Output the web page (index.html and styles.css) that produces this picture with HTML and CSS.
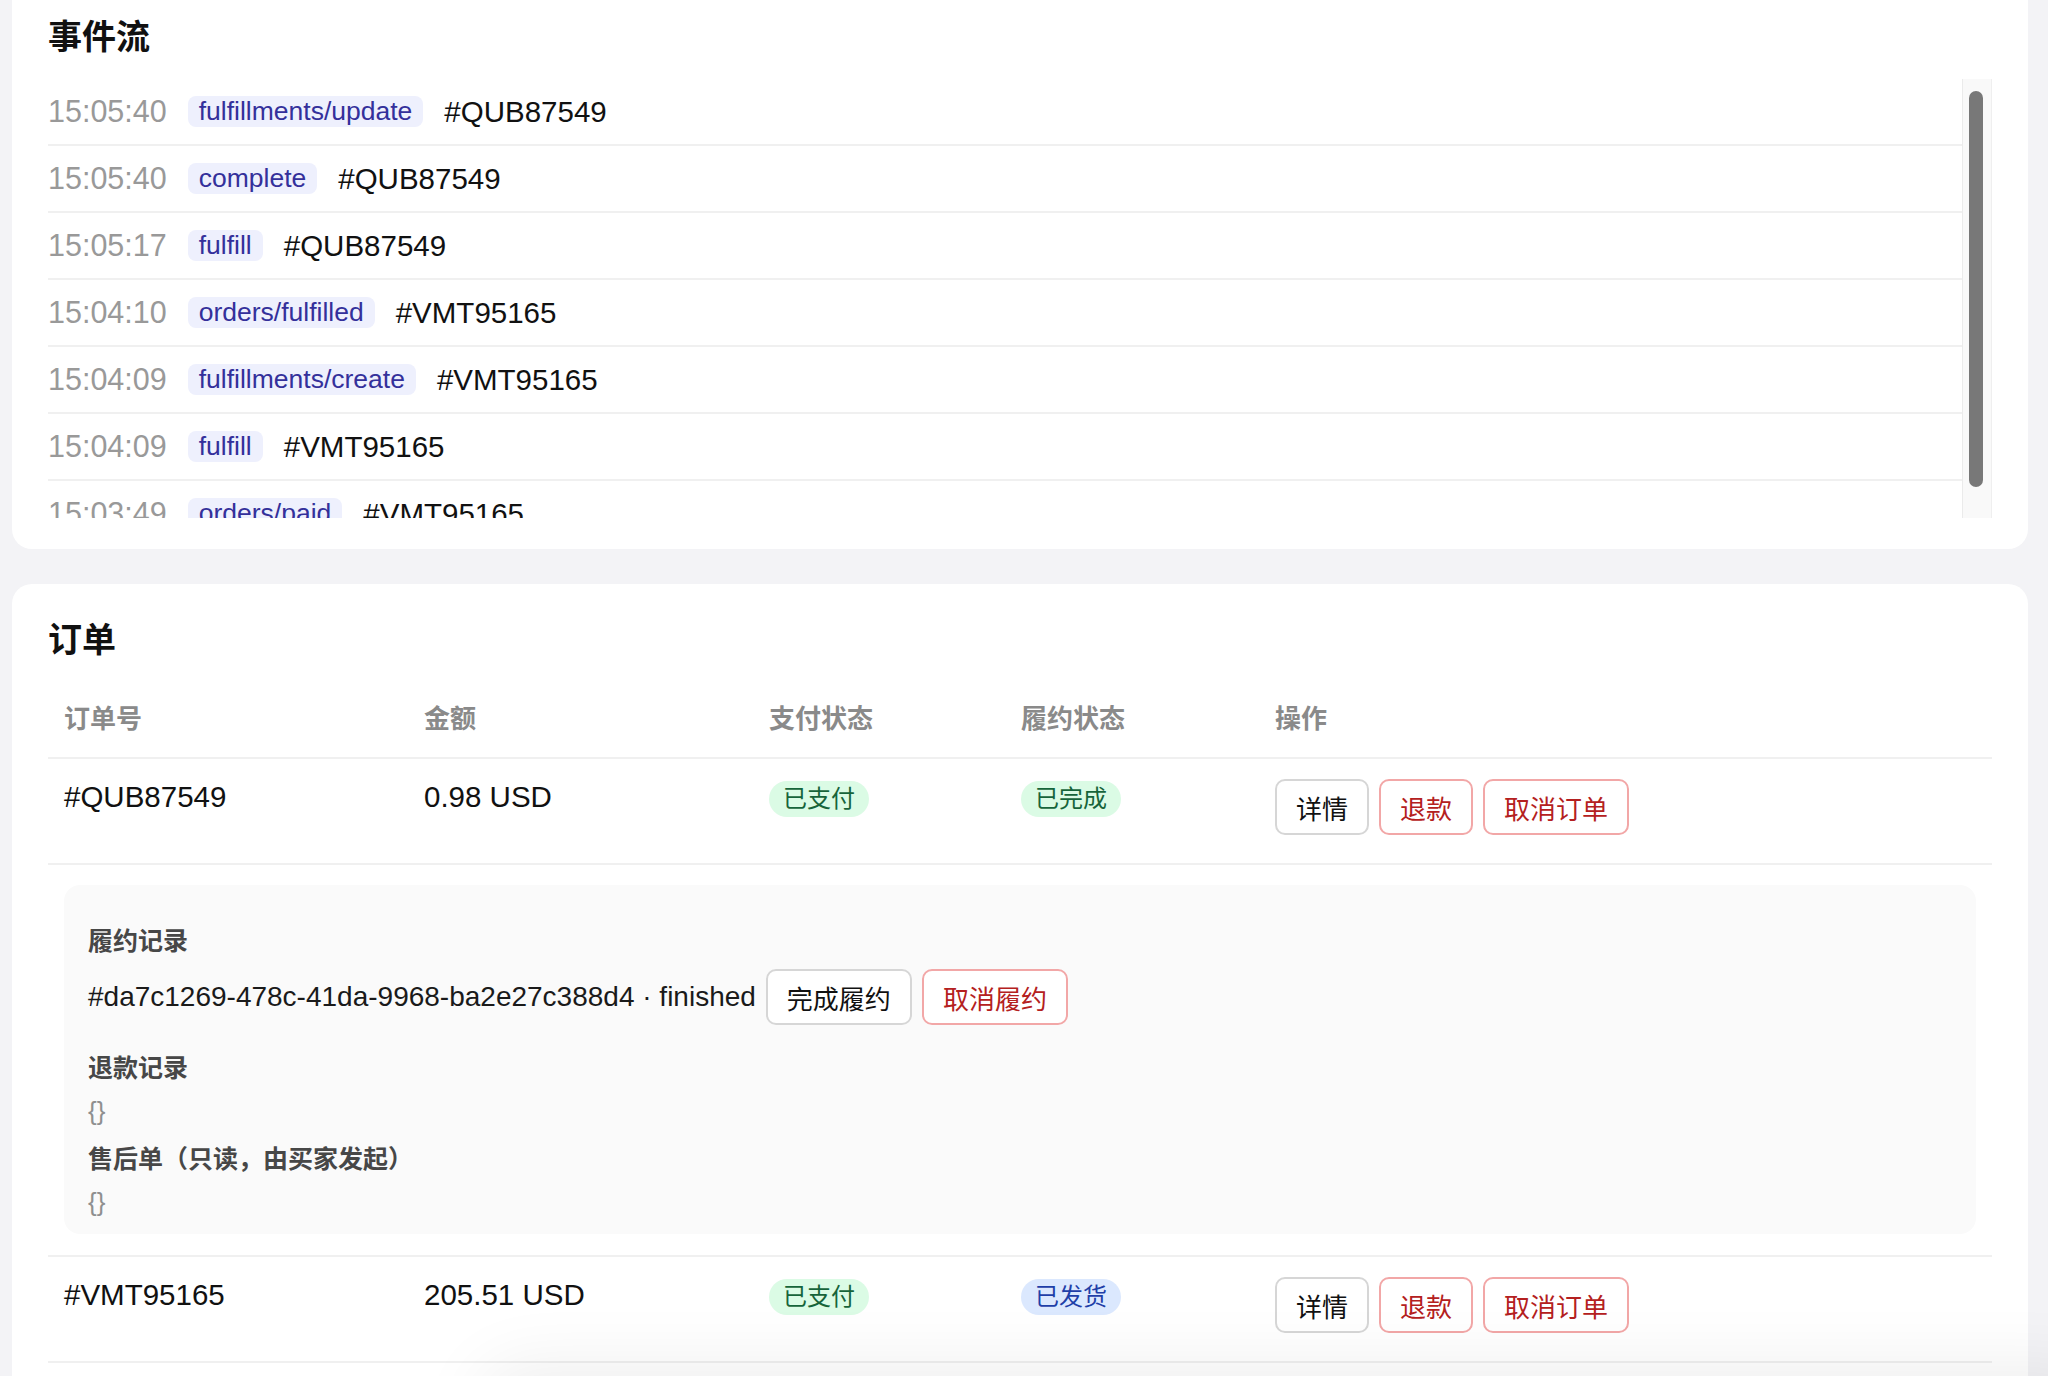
FILE: index.html
```
<!DOCTYPE html>
<html lang="zh-CN">

<head>
    <meta charset="UTF-8" />
    <meta name="viewport" content="width=device-width, initial-scale=1" />
    <title>订单与事件</title>

    <link rel="stylesheet" href="styles.css">
</head>

<body>

    <main class="page">
        <section class="card events-card">
            <h2 class="card-title">事件流</h2>
            <div class="event-scroll">
                <div class="event-list">
                    <div class="event-row">
                        <span class="event-time">15:05:40</span>
                        <span class="event-tag">fulfillments/update</span>
                        <span class="event-order">#QUB87549</span>
                    </div>
                    <div class="event-row">
                        <span class="event-time">15:05:40</span>
                        <span class="event-tag">complete</span>
                        <span class="event-order">#QUB87549</span>
                    </div>
                    <div class="event-row">
                        <span class="event-time">15:05:17</span>
                        <span class="event-tag">fulfill</span>
                        <span class="event-order">#QUB87549</span>
                    </div>
                    <div class="event-row">
                        <span class="event-time">15:04:10</span>
                        <span class="event-tag">orders/fulfilled</span>
                        <span class="event-order">#VMT95165</span>
                    </div>
                    <div class="event-row">
                        <span class="event-time">15:04:09</span>
                        <span class="event-tag">fulfillments/create</span>
                        <span class="event-order">#VMT95165</span>
                    </div>
                    <div class="event-row">
                        <span class="event-time">15:04:09</span>
                        <span class="event-tag">fulfill</span>
                        <span class="event-order">#VMT95165</span>
                    </div>
                    <div class="event-row">
                        <span class="event-time">15:03:49</span>
                        <span class="event-tag">orders/paid</span>
                        <span class="event-order">#VMT95165</span>
                    </div>
                </div>
                <div class="scrollbar">
                    <div class="scrollbar-thumb"></div>
                </div>
            </div>
        </section>

        <section class="card">
            <h2 class="card-title">订单</h2>
            <table class="orders">
                <colgroup>
                    <col class="col-id">
                    <col class="col-amount">
                    <col class="col-pay">
                    <col class="col-fulfill">
                    <col>
                </colgroup>
                <thead>
                    <tr>
                        <th>订单号</th>
                        <th>金额</th>
                        <th>支付状态</th>
                        <th>履约状态</th>
                        <th>操作</th>
                    </tr>
                </thead>
                <tbody>
                    <tr>
                        <td>#QUB87549</td>
                        <td>0.98 USD</td>
                        <td><span class="badge badge-green">已支付</span></td>
                        <td><span class="badge badge-green">已完成</span></td>
                        <td>
                            <div class="actions">
                                <button class="btn">详情</button>
                                <button class="btn btn-danger">退款</button>
                                <button class="btn btn-danger">取消订单</button>
                            </div>
                        </td>
                    </tr>
                    <tr class="detail-row">
                        <td colspan="5">
                            <div class="detail-panel">
                                <div class="detail-label">履约记录</div>
                                <div class="fulfillment-line">
                                    <span>#da7c1269-478c-41da-9968-ba2e27c388d4 · finished</span>
                                    <button class="btn">完成履约</button>
                                    <button class="btn btn-danger">取消履约</button>
                                </div>
                                <div class="detail-label">退款记录</div>
                                <div class="detail-empty">{}</div>
                                <div class="detail-label">售后单（只读，由买家发起）</div>
                                <div class="detail-empty">{}</div>
                            </div>
                        </td>
                    </tr>
                    <tr>
                        <td>#VMT95165</td>
                        <td>205.51 USD</td>
                        <td><span class="badge badge-green">已支付</span></td>
                        <td><span class="badge badge-blue">已发货</span></td>
                        <td>
                            <div class="actions">
                                <button class="btn">详情</button>
                                <button class="btn btn-danger">退款</button>
                                <button class="btn btn-danger">取消订单</button>
                            </div>
                        </td>
                    </tr>
                </tbody>
            </table>
        </section>
    </main>

    <div class="toast-shadow"></div>

</body>

</html>
```

FILE: styles.css
```
:root {
    --page-bg: #f3f3f6;
    --card-bg: #ffffff;
    --text: #111111;
    --muted: #999999;
    --line: #f0f0f0;
    --tag-bg: #eef0fd;
    --tag-text: #34309b;
    --red: #b42020;
    --red-border: #f2a7a7;
}

body {
    margin: 0;
    font-family: "Liberation Sans", "Noto Sans CJK SC", sans-serif;
    background-color: var(--page-bg);
    color: var(--text);
    overflow: hidden;
}

.page {
    display: flex;
    flex-direction: column;
    gap: 35px;
    padding: 0 20px 40px 12px;
    margin-top: -19px;
}

.card {
    background: var(--card-bg);
    border-radius: 20px;
    padding: 36px;
}

.events-card {
    padding-bottom: 31px;
}

.card-title {
    margin: 0 0 22px;
    font-size: 34px;
    line-height: 40px;
    font-weight: bold;
}

/* event stream */

.event-scroll {
    display: flex;
    height: 439px;
}

.event-list {
    flex: 1;
    overflow: hidden;
}

.scrollbar {
    width: 30px;
    background: #f9f9f9;
    border-left: 1px solid #ebebeb;
    border-right: 1px solid #efefef;
    padding: 12px 8px 0 6px;
    box-sizing: border-box;
}

.scrollbar-thumb {
    height: 396px;
    border-radius: 8px;
    background: #787878;
}

.event-row {
    display: flex;
    align-items: center;
    gap: 21px;
    height: 65px;
    border-bottom: 2px solid var(--line);
}

.event-time {
    font-size: 30.5px;
    color: var(--muted);
}

.event-tag {
    font-size: 26.5px;
    line-height: 31px;
    padding: 0 11px;
    border-radius: 8px;
    background: var(--tag-bg);
    color: var(--tag-text);
}

.event-order {
    font-size: 29.5px;
}

/* orders table */

.orders {
    width: 100%;
    border-collapse: collapse;
    table-layout: fixed;
}

.col-id {
    width: 360px;
}

.col-amount {
    width: 345px;
}

.col-pay {
    width: 252px;
}

.col-fulfill {
    width: 254px;
}

.orders th {
    text-align: left;
    font-size: 26px;
    line-height: 37px;
    color: #8a8a8a;
    padding: 19px 16px;
    border-bottom: 2px solid var(--line);
}

.orders td {
    vertical-align: top;
    font-size: 29.5px;
    line-height: 36px;
    padding: 20px 16px 28px;
    border-bottom: 2px solid var(--line);
}

.orders .detail-row td {
    padding: 20px 16px 21px;
}

.badge {
    display: inline-block;
    font-size: 24px;
    line-height: 36px;
    padding: 0 14px;
    border-radius: 18px;
}

.badge-green {
    background: #dbfbe5;
    color: #17643a;
}

.badge-blue {
    background: #dbe8fe;
    color: #1f3fa8;
}

.actions {
    display: flex;
    gap: 10px;
}

.btn {
    font-family: inherit;
    font-size: 26px;
    height: 56px;
    padding: 0 19px;
    border: 2px solid #d6d6d6;
    border-radius: 10px;
    background: #ffffff;
    color: var(--text);
}

.btn-danger {
    border-color: var(--red-border);
    color: var(--red);
}

/* order detail */

.detail-panel {
    background: #fafafa;
    border-radius: 16px;
    padding: 38px 24px 14px;
}

.detail-label {
    font-size: 25px;
    line-height: 36px;
    font-weight: bold;
    color: #474747;
}

.fulfillment-line {
    display: flex;
    align-items: center;
    gap: 10px;
    height: 56px;
    margin: 10px 0 25px;
    font-size: 28px;
    color: #1a1a1a;
}

.detail-empty {
    font-size: 26px;
    line-height: 36px;
    color: #8f8f8f;
    margin: 7px 0 12px;
}

.detail-empty:last-child {
    margin-bottom: 0;
}

.toast-shadow {
    position: fixed;
    left: 480px;
    right: -60px;
    bottom: -140px;
    height: 140px;
    border-radius: 40px;
    box-shadow: 0 -10px 70px rgba(0, 0, 0, 0.07);
}
```
